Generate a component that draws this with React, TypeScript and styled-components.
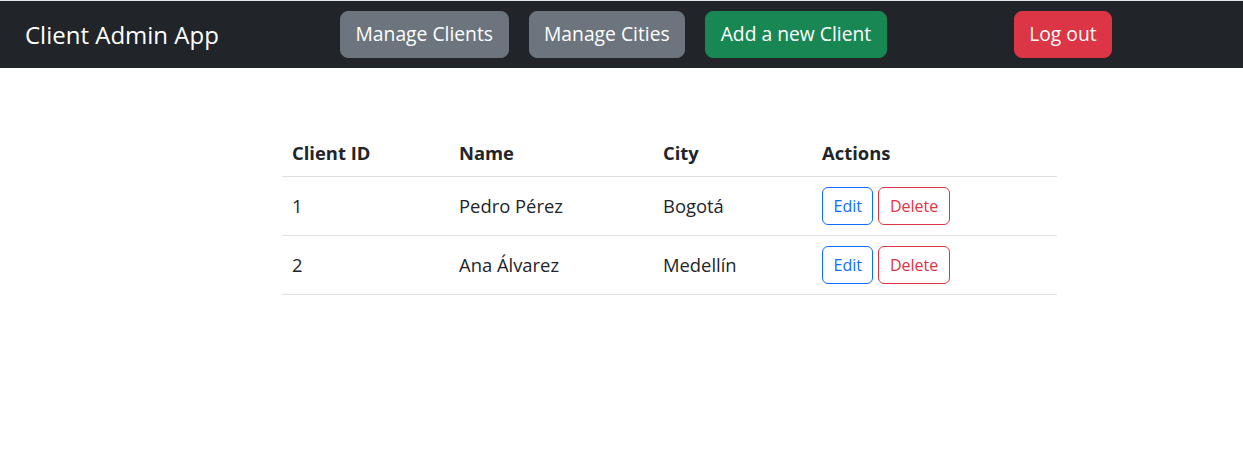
import React from "react";
import styled, { createGlobalStyle, css } from "styled-components";

const Global = createGlobalStyle`
  html, body { margin: 0; padding: 0; background: #fff; }
  body {
    font-family: "Segoe UI", "Open Sans", "Noto Sans", sans-serif;
    color: #212529;
    font-size: 16px;
    line-height: 1.5;
    border-top: 1px solid #e4e6e9;
  }
  * { box-sizing: border-box; }
`;

const Navbar = styled.nav`
  background: #212529;
  height: 67px;
  display: flex;
  align-items: center;
  padding-left: 25px;
`;

const Brand = styled.a`
  color: #fff;
  font-size: 24px;
  line-height: 36px;
  text-decoration: none;
  width: 315px;
  flex: none;
`;

const NavButtons = styled.div`
  display: flex;
  align-items: center;
  gap: 20px;
`;

const variants: Record<string, string> = {
  secondary: "#6c757d",
  success: "#198754",
  danger: "#dc3545",
};

const NavButton = styled.button<{ $variant: "secondary" | "success" | "danger"; $push?: number }>`
  font-family: inherit;
  font-size: 19.3px;
  line-height: 30px;
  padding: 7px 14.5px 8px;
  border-radius: 8px;
  border: 1px solid ${(p) => variants[p.$variant]};
  background: ${(p) => variants[p.$variant]};
  color: #fff;
  cursor: pointer;
  ${(p) => p.$push && css`margin-left: ${p.$push}px;`}
`;

const Main = styled.main`
  padding: 64px 186px 0 282px;
`;

const Table = styled.table`
  width: 775px;
  border-collapse: collapse;
  font-size: 18.4px;
`;

const Th = styled.th<{ $w?: number }>`
  text-align: left;
  font-weight: 700;
  line-height: 28px;
  padding: 7px 10px 9px;
  border-bottom: 1px solid #dee2e6;
  ${(p) => p.$w && css`width: ${p.$w}px;`}
`;

const Td = styled.td`
  padding: 10px 10px;
  line-height: 38px;
  border-bottom: 1px solid #dee2e6;
  vertical-align: middle;
`;

const Actions = styled.div`
  display: flex;
  gap: 5px;
`;

const OutlineButton = styled.button<{ $color: string }>`
  font-family: inherit;
  font-size: 16px;
  line-height: 24px;
  padding: 6px 10.5px;
  border-radius: 6px;
  border: 1px solid ${(p) => p.$color};
  background: transparent;
  color: ${(p) => p.$color};
  cursor: pointer;
`;

const clients = [
  { id: 1, name: "Pedro Pérez", city: "Bogotá" },
  { id: 2, name: "Ana Álvarez", city: "Medellín" },
];

export default function App() {
  return (
    <>
      <Global />
      <Navbar>
        <Brand href="#">Client Admin App</Brand>
        <NavButtons>
          <NavButton $variant="secondary">Manage Clients</NavButton>
          <NavButton $variant="secondary">Manage Cities</NavButton>
          <NavButton $variant="success">Add a new Client</NavButton>
          <NavButton $variant="danger" $push={107}>Log out</NavButton>
        </NavButtons>
      </Navbar>
      <Main>
        <Table>
          <thead>
            <tr>
              <Th $w={167}>Client ID</Th>
              <Th $w={204}>Name</Th>
              <Th $w={159}>City</Th>
              <Th>Actions</Th>
            </tr>
          </thead>
          <tbody>
            {clients.map((c) => (
              <tr key={c.id}>
                <Td>{c.id}</Td>
                <Td>{c.name}</Td>
                <Td>{c.city}</Td>
                <Td>
                  <Actions>
                    <OutlineButton $color="#0d6efd">Edit</OutlineButton>
                    <OutlineButton $color="#dc3545">Delete</OutlineButton>
                  </Actions>
                </Td>
              </tr>
            ))}
          </tbody>
        </Table>
      </Main>
    </>
  );
}
